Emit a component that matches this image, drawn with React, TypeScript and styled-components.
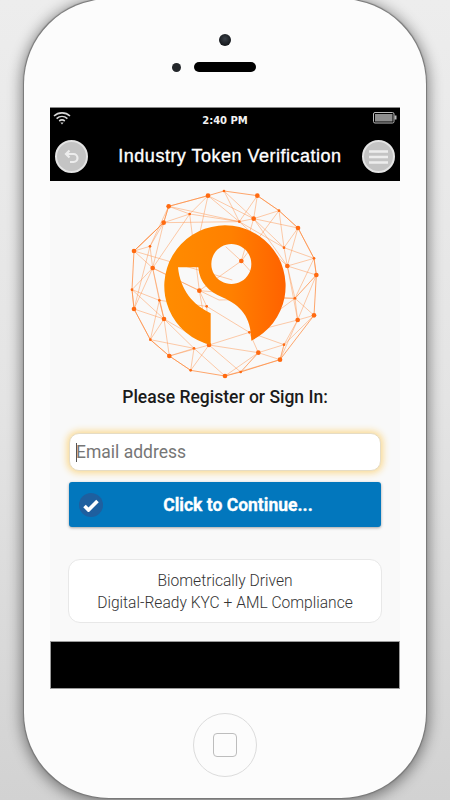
import React from 'react';
import styled, { createGlobalStyle } from 'styled-components';

const GlobalStyle = createGlobalStyle`
  html, body {
    margin: 0;
    height: 800px;
    overflow: hidden;
    background: linear-gradient(180deg, #ededed 0%, #e4e4e4 50%, #d2d2d2 100%);
  }
`;

const Phone = styled.div`
  box-sizing: border-box;
  width: 402px;
  height: 799px;
  margin: -1px 0 0 24px;
  padding-top: 35px;
  border-radius: 85px;
  background: #fcfcfc;
  box-shadow: 0 0 1px 0.5px #777, 0 2px 14px 3px rgba(0, 0, 0, 0.42);
  display: flex;
  flex-direction: column;
  align-items: center;
`;

const Camera = styled.div`
  width: 12px;
  height: 12px;
  border-radius: 50%;
  background: radial-gradient(circle at 50% 40%, #3a4048, #15181c 70%);
`;

const SpeakerRow = styled.div`
  display: grid;
  grid-template-columns: 1fr 62px 1fr;
  column-gap: 13px;
  align-items: center;
  width: 100%;
  margin-top: 16px;
`;

const SensorDot = styled.div`
  justify-self: end;
  width: 9px;
  height: 9px;
  border-radius: 50%;
  background: #23262a;
`;

const Speaker = styled.div`
  height: 10px;
  border-radius: 5px;
  background: #000;
`;

const Screen = styled.div`
  box-sizing: border-box;
  width: 350px;
  height: 582px;
  margin-top: 35px;
  background: #f9f9f9;
  display: flex;
  flex-direction: column;
`;

const TopBar = styled.div`
  height: 74px;
  background: #000;
  color: #fff;
  border-top: 1px solid #8a8a8a;
  box-sizing: border-box;
  display: flex;
  flex-direction: column;
`;

const StatusRow = styled.div`
  box-sizing: border-box;
  height: 24px;
  padding: 3px 3px 0;
  display: grid;
  grid-template-columns: 1fr auto 1fr;
  align-items: start;

  svg:last-child {
    justify-self: end;
    margin-top: 1px;
  }
`;

const Time = styled.span`
  margin-top: 3px;
  line-height: 13px;
  font-family: 'DejaVu Sans', sans-serif;
  font-size: 10px;
  font-weight: 700;
  color: #f2f2f2;
`;

const HeaderRow = styled.div`
  flex: 1;
  padding: 0 5px;
  display: flex;
  align-items: center;
  justify-content: space-between;
`;

const Title = styled.h1`
  margin: 0 0 0 10px;
  font-family: 'Liberation Sans', Arial, sans-serif;
  font-size: 18px;
  font-weight: 400;
  letter-spacing: 0.5px;
  -webkit-text-stroke: 0.35px #fff;
  color: #fff;
`;

const RoundButton = styled.button`
  width: 33px;
  height: 33px;
  padding: 0;
  border: 2px solid #e4e4e4;
  border-radius: 50%;
  background: #c4c4c4;
  display: flex;
  align-items: center;
  justify-content: center;
`;

const Content = styled.main`
  flex: 1;
  display: flex;
  flex-direction: column;
  align-items: center;
`;

const LogoWrap = styled.div`
  height: 199px;
  padding-right: 2px;
  display: flex;
  justify-content: center;
`;

const Heading = styled.h2`
  margin: 7px 0 0;
  font-family: Roboto, sans-serif;
  font-size: 17.5px;
  line-height: 20px;
  font-weight: 500;
  color: #1b1b1b;
`;

const InputWrap = styled.div`
  position: relative;
  width: 312px;
  height: 38px;
  margin-top: 26px;

  &::after {
    content: '';
    position: absolute;
    left: 7px;
    top: 10px;
    width: 1px;
    height: 19px;
    background: #555;
  }
`;

const EmailInput = styled.input`
  box-sizing: border-box;
  width: 100%;
  height: 100%;
  padding: 0 6px;
  border: 1px solid #e6dcc4;
  border-radius: 10px;
  outline: none;
  background: #fff;
  box-shadow: 0 0 7px 2px #fbd98f;
  font-family: Roboto, sans-serif;
  font-size: 17.5px;

  &::placeholder {
    color: #767676;
    opacity: 1;
  }
`;

const ContinueButton = styled.button`
  position: relative;
  width: 312px;
  height: 45px;
  margin-top: 11px;
  border: none;
  border-radius: 3px;
  background: #0277bd;
  box-shadow: 0 1px 3px rgba(0, 0, 0, 0.35);
  color: #fff;
  font-family: Roboto, sans-serif;
  font-size: 17.5px;
  font-weight: 700;
  -webkit-text-stroke: 0.3px #fff;
  display: flex;
  align-items: center;
  justify-content: center;
  padding: 0 0 0 26px;
`;

const CheckBadge = styled.span`
  position: absolute;
  left: 10px;
  top: 11px;
  width: 24px;
  height: 24px;
  border-radius: 50%;
  background: #1e5f9f;
  display: flex;
  align-items: center;
  justify-content: center;
`;

const InfoCard = styled.div`
  box-sizing: border-box;
  width: 314px;
  height: 64px;
  margin-top: 32px;
  padding-top: 2px;
  border: 1.5px solid #e8e8e8;
  border-radius: 12px;
  background: #fff;
  color: #333;
  font-family: Roboto, 'Liberation Sans', sans-serif;
  font-size: 15.6px;
  font-weight: 300;
  line-height: 22px;
  text-align: center;
  display: flex;
  flex-direction: column;
  justify-content: center;
`;

const Footer = styled.footer`
  box-sizing: border-box;
  height: 48px;
  background: #000;
  border: 1px solid #9a9a9a;
`;

const HomeButton = styled.div`
  box-sizing: border-box;
  width: 64px;
  height: 64px;
  margin-top: 24px;
  border: 1px solid #dcdcdc;
  border-radius: 50%;
  display: flex;
  align-items: center;
  justify-content: center;
`;

const HomeSquare = styled.div`
  box-sizing: border-box;
  width: 24px;
  height: 24px;
  border: 1.5px solid #bdbdbd;
  border-radius: 4px;
`;

const outerNodes: [number, number][] = [
  [267, 47], [315, 33], [415, 47], [480, 92], [537, 144], [585, 235], [592, 285], [585, 406],
  [483, 539], [365, 576], [318, 588], [215, 571], [151, 528], [94, 479], [45, 387], [39, 329],
  [45, 213], [134, 128], [149, 79],
];

const innerNodes: [number, number][] = [
  [404, 116], [505, 258], [536, 420], [418, 518], [270, 495], [135, 417], [101, 264], [241, 332],
  [367, 243], [212, 102], [361, 125], [495, 203], [528, 355], [495, 494], [391, 457], [225, 505],
  [121, 361], [93, 199], [263, 379],
];

const bigNodes = new Set(['404,116', '505,258', '536,420', '418,518', '135,417', '101,264', '241,332', '367,243', '45,213', '45,387', '151,528', '592,285', '318,588', '585,406', '483,539', '537,144', '415,47', '267,47', '149,79', '134,128', '270,495']);

const links = [
  'M267 47L404 116L537 144', 'M149 79L361 125L505 258L585 235', 'M134 128L212 102L267 47', 'M134 128L101 264L135 417L151 528',
  'M149 79L134 128L45 213', 'M45 213L101 264L39 329', 'M93 199L134 128', 'M93 199L101 264', 'M93 199L45 387', 'M101 264L241 332L270 495',
  'M45 387L135 417L270 495', 'M39 329L121 361L135 417', 'M121 361L94 479', 'M121 361L263 379L391 457', 'M94 479L225 505L318 588',
  'M151 528L270 495L418 518', 'M225 505L215 571', 'M270 495L365 576', 'M270 495L391 457L536 420', 'M418 518L483 539L495 494', 'M418 518L318 588',
  'M391 457L418 518L365 576', 'M536 420L585 406', 'M536 420L483 539', 'M536 420L528 355L505 258', 'M528 355L585 406', 'M528 355L592 285',
  'M505 258L537 144', 'M505 258L536 420', 'M404 116L495 203L505 258', 'M404 116L415 47', 'M404 116L367 243L241 332L212 102', 'M367 243L480 92',
  'M361 125L415 47', 'M315 33L404 116', 'M267 47L240 170', 'M480 92L537 144L495 203', 'M495 203L585 235', 'M101 264L300 360L528 355', 'M45 213L340 300',
  'M241 332L528 355', 'M263 379L241 332', 'M367 243L320 200', 'M367 243L400 280',
  'M149 79L212 102L361 125L404 116L480 92', 'M315 33L361 125', 'M415 47L480 92L495 203', 'M537 144L585 235L592 285L528 355', 'M585 235L528 355',
  'M592 285L536 420', 'M585 406L495 494L483 539', 'M495 494L536 420', 'M495 494L418 518', 'M483 539L318 588', 'M365 576L418 518', 'M215 571L151 528L94 479L45 387',
  'M215 571L270 495', 'M151 528L225 505', 'M94 479L135 417L121 361', 'M45 387L101 264', 'M39 329L45 387', 'M45 213L93 199', 'M45 213L134 128', 'M39 329L135 417',
  'M134 128L361 125', 'M101 264L121 361', 'M101 264L212 102', 'M135 417L225 505', 'M263 379L270 495', 'M391 457L495 494', 'M391 457L528 355',
  'M361 125L495 203', 'M404 116L505 258', 'M505 258L592 285', 'M267 47L361 125', 'M149 79L267 47', 'M93 199L149 79',
];

const Logo = () => (
  <svg width="210" height="199" viewBox="0 3 630 597" aria-hidden="true">
    <defs>
      <linearGradient id="disc" x1="0" x2="1" y1="0" y2="0">
        <stop offset="0" stopColor="#ff8c00" />
        <stop offset="0.55" stopColor="#ff8000" />
        <stop offset="1" stopColor="#ff6200" />
      </linearGradient>
    </defs>
    <polygon
      points={outerNodes.map((p) => p.join(',')).join(' ')}
      fill="none"
      stroke="#ff8a3c"
      strokeOpacity="0.75"
      strokeWidth="3"
    />
    {links.map((d) => (
      <path key={d} d={d} fill="none" stroke="#ff8a3c" strokeOpacity="0.55" strokeWidth="2.4" />
    ))}
    {[...outerNodes, ...innerNodes].map(([x, y]) => (
      <circle key={`${x}-${y}`} cx={x} cy={y} r={bigNodes.has(`${x},${y}`) ? 7 : 4} fill="#ff6a10" />
    ))}
    <path
      fillRule="evenodd"
      fill="url(#disc)"
      d="M397 482A182 182 0 1 0 275 495L275 400C222 375 184 330 177 262L238 262C242 310 270 335 310 352C365 376 396 410 397 482ZM337 192a60 60 0 1 0 0.01 0Z"
    />
  </svg>
);

const App = () => (
  <>
    <GlobalStyle />
    <Phone>
      <Camera />
      <SpeakerRow>
        <SensorDot />
        <Speaker />
      </SpeakerRow>
      <Screen>
        <TopBar>
          <StatusRow>
            <svg width="18" height="14" viewBox="0 0 18 14" fill="none" stroke="#d8d8d8" strokeWidth="1.6" aria-hidden="true">
              <path d="M1 5C5.5 0.8 12.5 0.8 17 5" />
              <path d="M3.6 7.6C6.8 4.8 11.2 4.8 14.4 7.6" />
              <path d="M6.2 10C7.9 8.7 10.1 8.7 11.8 10" />
              <path d="M7.4 11.6L9 13.4L10.6 11.6Z" fill="#d8d8d8" stroke="none" />
            </svg>
            <Time>2:40 PM</Time>
            <svg width="24" height="12" viewBox="0 0 24 12" aria-hidden="true">
              <rect x="0.5" y="0.5" width="20.5" height="10.5" rx="1.5" fill="#000" stroke="#bcbcbc" />
              <rect x="2" y="2" width="17.5" height="7.5" fill="#8e8e8e" />
              <rect x="21.5" y="3.5" width="2" height="4" fill="#bcbcbc" />
            </svg>
          </StatusRow>
          <HeaderRow>
            <RoundButton aria-label="Back">
              <svg width="19" height="19" viewBox="0 0 19 19" fill="none" stroke="#ededed" strokeWidth="2.2" aria-hidden="true">
                <path d="M4.5 7H11.5A4 4 0 0 1 11.5 15H8" />
                <path d="M7.5 3.5L4 7L7.5 10.5" />
              </svg>
            </RoundButton>
            <Title>Industry Token Verification</Title>
            <RoundButton aria-label="Menu">
              <svg width="19" height="16" viewBox="0 0 19 16" fill="none" stroke="#ededed" strokeWidth="2.4" aria-hidden="true">
                <path d="M0 2.5H19M0 8H19M0 13.5H19" />
              </svg>
            </RoundButton>
          </HeaderRow>
        </TopBar>
        <Content>
          <LogoWrap>
            <Logo />
          </LogoWrap>
          <Heading>Please Register or Sign In:</Heading>
          <InputWrap>
            <EmailInput placeholder="Email address" />
          </InputWrap>
          <ContinueButton>
            <CheckBadge>
              <svg width="16" height="13" viewBox="0 0 16 13" fill="none" stroke="#fff" strokeWidth="3.6" aria-hidden="true">
                <path d="M1.5 7L5.5 11L14.5 2" />
              </svg>
            </CheckBadge>
            Click to Continue...
          </ContinueButton>
          <InfoCard>
            <div>Biometrically Driven</div>
            <div>Digital-Ready KYC + AML Compliance</div>
          </InfoCard>
        </Content>
        <Footer />
      </Screen>
      <HomeButton>
        <HomeSquare />
      </HomeButton>
    </Phone>
  </>
);

export default App;
